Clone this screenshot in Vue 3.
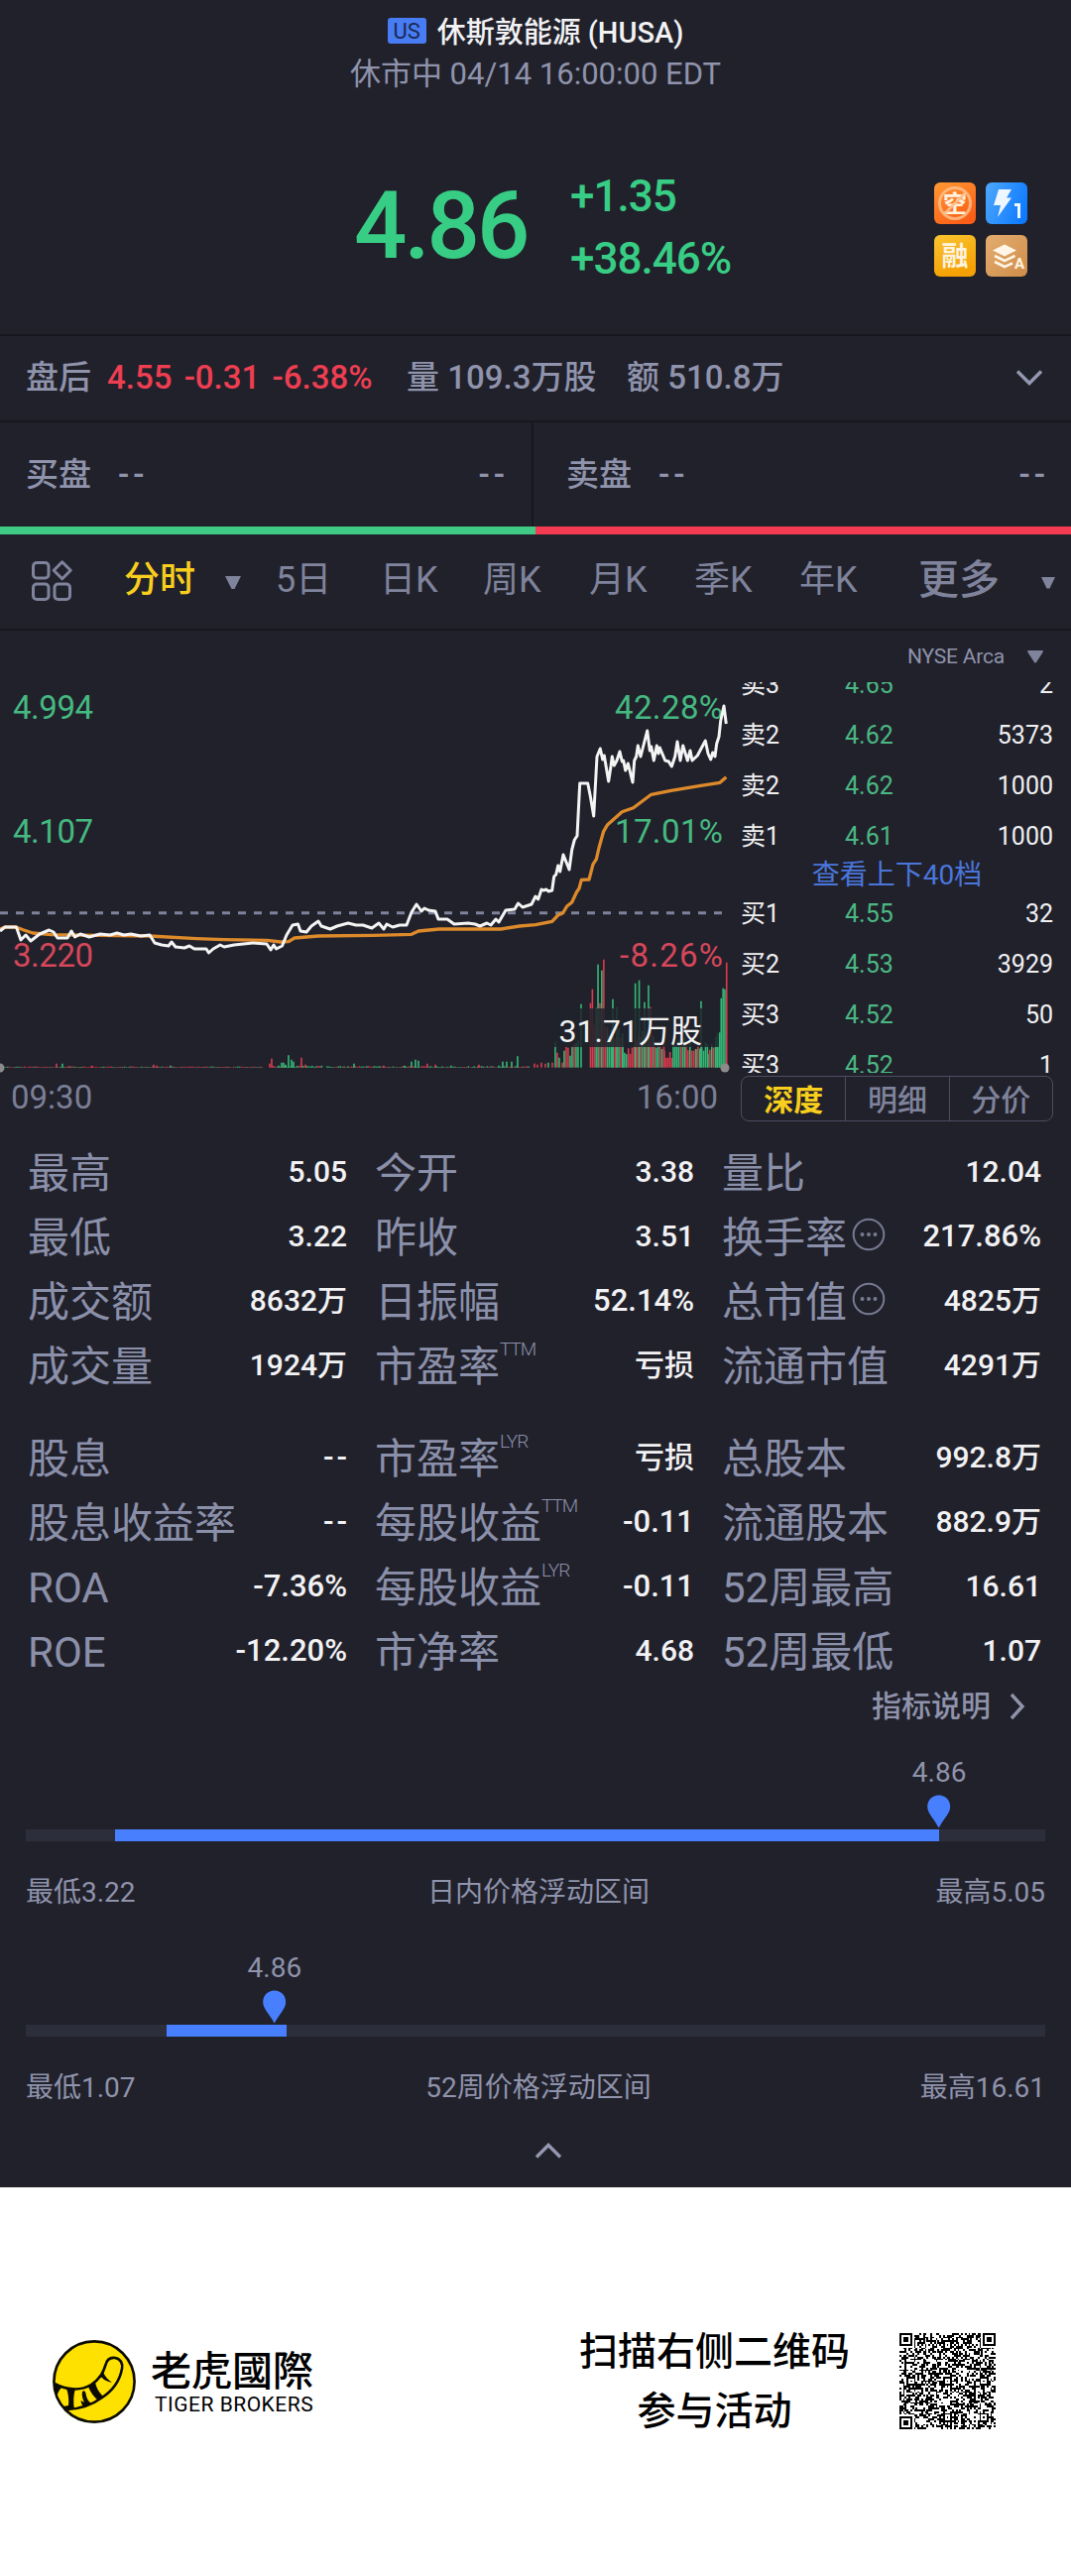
<template>
  <div class="page">
    <div class="quote-page">
      <header class="header">
        <div class="title">
          <span class="market">US</span>
          <span>休斯敦能源 (HUSA)</span>
        </div>
        <div class="status">休市中 04/14 16:00:00 EDT</div>
        <div class="quote">
          <div class="price">4.86</div>
          <div class="change">
            <div>+1.35</div>
            <div>+38.46%</div>
          </div>
          <div class="badges">
            <svg width="42" height="42" viewBox="0 0 42 42">
              <defs>
                <linearGradient id="g-short" x1="0" y1="0" x2="0.6" y2="1">
                  <stop offset="0" stop-color="#ff9a35" />
                  <stop offset="1" stop-color="#fb5f17" />
                </linearGradient>
              </defs>
              <rect width="42" height="42" rx="6" fill="url(#g-short)" />
              <text x="21" y="30" text-anchor="middle" class="badge-text" font-size="24">空</text>
              <circle cx="21" cy="21" r="15.5" fill="none" stroke="#ffc08a" stroke-width="3" opacity="0.85" />
              <path d="M10 32 L32 10" stroke="#ffc08a" stroke-width="3" opacity="0.9" />
            </svg>
            <svg width="42" height="42" viewBox="0 0 42 42">
              <defs>
                <linearGradient id="g-flash" x1="0" y1="0.2" x2="1" y2="0.6">
                  <stop offset="0" stop-color="#4ba5fb" />
                  <stop offset="1" stop-color="#0e7bff" />
                </linearGradient>
              </defs>
              <rect width="42" height="42" rx="6" fill="url(#g-flash)" />
              <path d="M13 7 H26 L21 15.500 H26 L12 35 L15 23 H8 Z" fill="#eef6ff" />
              <path d="M29 22.500 H33.500 V36" fill="none" stroke="#eef6ff" stroke-width="3" />
            </svg>
            <svg width="42" height="42" viewBox="0 0 42 42">
              <defs>
                <linearGradient id="g-margin" x1="0" y1="0" x2="0.4" y2="1">
                  <stop offset="0" stop-color="#f9c531" />
                  <stop offset="1" stop-color="#f5a003" />
                </linearGradient>
              </defs>
              <rect width="42" height="42" rx="6" fill="url(#g-margin)" />
              <text x="21" y="31" text-anchor="middle" class="badge-text" font-size="27">融</text>
            </svg>
            <svg width="42" height="42" viewBox="0 0 42 42">
              <defs>
                <linearGradient id="g-level" x1="0" y1="0" x2="1" y2="1">
                  <stop offset="0" stop-color="#e3ad70" />
                  <stop offset="1" stop-color="#cf8d49" />
                </linearGradient>
              </defs>
              <rect width="42" height="42" rx="6" fill="url(#g-level)" />
              <path d="M19 9.500 L31 15.500 L19 21.500 L7 15.500 Z" fill="#fff6e8" />
              <path d="M9 21 L19 26 L29.500 21 M9 27 L19 32 L27 28.500" fill="none" stroke="#fff6e8" stroke-width="2.600" />
              <text x="34" y="34" text-anchor="middle" class="badge-text" font-size="15">A</text>
            </svg>
          </div>
        </div>
      </header>

      <div class="after-hours">
        <span>盘后</span>
        <span class="after-price">4.55 -0.31 -6.38%</span>
        <span class="after-volume">量 109.3万股</span>
        <span class="after-amount">额 510.8万</span>
        <svg class="after-arrow" width="28" height="18" viewBox="0 0 28 18">
          <path d="M2 2.500 L14 14.500 L26 2.500" fill="none" stroke="#9498b0" stroke-width="3.400" />
        </svg>
      </div>

      <div class="bid-ask">
        <div class="side"><span>买盘</span><i>--</i><b>--</b></div>
        <div class="side ask"><span>卖盘</span><i>--</i><b>--</b></div>
      </div>
      <div class="ratio"><div></div><div></div></div>

      <nav class="tabs">
        <svg width="42" height="42" viewBox="0 0 42 42" fill="none" stroke="#7f839b" stroke-width="3">
          <rect x="2.500" y="2.500" width="15.500" height="15.500" rx="3.500" />
          <rect x="2.500" y="24" width="15.500" height="15.500" rx="3.500" />
          <rect x="24" y="24" width="15.500" height="15.500" rx="3.500" />
          <path d="M31.700 1.800 L40.200 10.300 L31.700 18.800 L23.200 10.300 Z" stroke-linejoin="round" />
        </svg>
        <span class="active">分时</span>
        <svg class="caret" width="16" height="14" viewBox="0 0 16 14"><path d="M0 0 H16 L9.500 13 H6.500 Z" fill="#7f839b" /></svg>
        <span v-for="tab in tabs" :key="tab">{{ tab }}</span>
        <span class="more">更多</span>
        <svg class="caret" width="14" height="12" viewBox="0 0 14 12"><path d="M0 0 H14 L8.500 11.500 H5.500 Z" fill="#7f839b" /></svg>
      </nav>

      <section class="chart-section">
        <svg class="chart" width="736" height="513" viewBox="0 636 736 513">
          <rect
            v-for="(bar, i) in volumeBars"
            :key="i"
            :x="bar[0] - 0.85"
            :y="1076.7 - bar[1]"
            width="1.6"
            :height="bar[1]"
            :fill="bar[2] ? '#35b877' : '#d83c4e'"
          />
          <rect x="556" y="1017" width="169" height="39" fill="#20222b" opacity="0.85" />
          <circle cx="0" cy="1077" r="4.500" fill="#8b8b8b" />
          <circle cx="731" cy="1077" r="4.500" fill="#8b8b8b" />
          <path d="M0 920.700 H728" stroke="#7f839b" stroke-width="3" stroke-dasharray="8 8" />
          <g class="axis">
            <text x="13" y="725" class="up" textLength="81">4.994</text>
            <text x="13" y="850" class="up" textLength="81">4.107</text>
            <text x="13" y="974.500" class="down" textLength="81">3.220</text>
            <text x="620" y="725" class="up" textLength="109">42.28%</text>
            <text x="620" y="850" class="up" textLength="109">17.01%</text>
            <text x="625" y="974.500" class="down" textLength="104">-8.26%</text>
            <text x="11" y="1118">09:30</text>
            <text x="724" y="1118" class="end">16:00</text>
          </g>
          <polyline :points="averageLine" fill="none" stroke="#dd8a2b" stroke-width="3.300" stroke-linejoin="round" />
          <polyline :points="priceLine" fill="none" stroke="#f4f4f4" stroke-width="3" stroke-linejoin="round" />
          <text x="563.500" y="1050.500" class="volume-text">31.71万股</text>
        </svg>

        <div class="depth">
          <div class="exchange">
            NYSE Arca
            <svg width="16" height="13" viewBox="0 0 16 13"><path d="M1 0 H15 Q16.500 0 15.500 2 L9 12 Q8 13 7 12 L0.500 2 Q-0.500 0 1 0 Z" fill="#7f839b" /></svg>
          </div>
          <div class="book">
            <div v-for="(row, i) in asks" :key="'a' + i" class="book-row">
              <span>{{ row[0] }}</span><span class="up">{{ row[1] }}</span><span>{{ row[2] }}</span>
            </div>
            <div class="book-link">查看上下40档</div>
            <div v-for="(row, i) in bids" :key="'b' + i" class="book-row">
              <span>{{ row[0] }}</span><span class="up">{{ row[1] }}</span><span>{{ row[2] }}</span>
            </div>
          </div>
          <div class="segment">
            <span class="selected">深度</span><span>明细</span><span>分价</span>
          </div>
        </div>
      </section>

      <section v-for="(group, g) in stats" :key="g" class="stats">
        <div v-for="item in group" :key="item.label + item.sup" class="stat">
          <span class="stat-label">{{ item.label }}<sup v-if="item.sup">{{ item.sup }}</sup></span>
          <svg v-if="item.info" class="info" width="34" height="34" viewBox="0 0 34 34">
            <circle cx="17" cy="17" r="15.300" fill="none" stroke="#777b92" stroke-width="2" />
            <circle cx="10.500" cy="17" r="2" fill="#777b92" />
            <circle cx="17" cy="17" r="2" fill="#777b92" />
            <circle cx="23.500" cy="17" r="2" fill="#777b92" />
          </svg>
          <span class="stat-value" :class="{ wide: /[-%]/.test(item.value), empty: item.value === '--' }">{{ item.value }}</span>
        </div>
      </section>

      <div class="explain">
        <span>指标说明</span>
        <svg width="16" height="28" viewBox="0 0 16 28">
          <path d="M2 2 L13 14 L2 26" fill="none" stroke="#8f93ab" stroke-width="3.400" />
        </svg>
      </div>

      <section v-for="range in ranges" :key="range.name" class="range">
        <div class="track">
          <div class="fill" :style="{ left: range.from + '%', width: range.to - range.from + '%' }"></div>
          <div class="marker" :style="{ left: range.at + '%' }">
            <span>4.86</span>
            <svg width="24" height="34" viewBox="0 0 24 34">
              <path d="M12 0.500 C5.500 0.500 0.500 5.500 0.500 12 C0.500 19 7 24 12 33.500 C17 24 23.500 19 23.500 12 C23.500 5.500 18.500 0.500 12 0.500 Z" fill="#477fff" />
            </svg>
          </div>
        </div>
        <div class="range-labels">
          <span>{{ range.low }}</span>
          <span>{{ range.name }}</span>
          <span>{{ range.high }}</span>
        </div>
      </section>

      <div class="collapse">
        <svg width="28" height="18" viewBox="0 0 28 18">
          <path d="M2 15.500 L14 3.500 L26 15.500" fill="none" stroke="#9498b0" stroke-width="3.400" />
        </svg>
      </div>
    </div>

    <footer class="footer">
      <svg class="logo" width="84" height="84" viewBox="0 0 84 84">
        <circle cx="42" cy="42" r="40.600" fill="#ffe100" stroke="#0b0b00" stroke-width="2.600" />
        <path
          d="M2 44 C13 50 28 52 39 45 C48 39 51 33 53.500 25 C55 19 59 17.500 63 18 C69 19 71 24 70 29 C68 40 62 50 50 58 C39 66 27 69.500 15 70"
          fill="none"
          stroke="#0b0b00"
          stroke-width="2.600"
        />
        <path d="M1 43 L9 48 Q5 52 4.500 58 Q1 51 1 43 Z M14 49 H23 Q20 59 22 70 L14 70 L11 67 L16 66 Q17 57 14 49 Z M30 52 Q33 50 33.500 54 Q34.500 61 39 64 L32 67 Q29 66 28.500 61 L32 63 Q29 57 30 52 Z M36 47 L43 42 Q44 50 51 57 L46 61 Q39 55 36 47 Z M46 37 L51 32 Q53 38 60 43 Q52 41 50 38 Z" fill="#0b0b00" />
      </svg>
      <div class="brand">
        <div class="brand-cn">老虎國際</div>
        <div class="brand-en">TIGER BROKERS</div>
      </div>
      <div class="promo">
        <div>扫描右侧二维码</div>
        <div>参与活动</div>
      </div>
      <svg class="qr" width="97" height="97" viewBox="0 0 53 53" shape-rendering="crispEdges">
        <path :d="qrPath" fill="#000" />
      </svg>
    </footer>
  </div>
</template>

<script setup>
const tabs = ['5日', '日K', '周K', '月K', '季K', '年K']

const asks = [
  ['卖3', '4.65', '2'],
  ['卖2', '4.62', '5373'],
  ['卖2', '4.62', '1000'],
  ['卖1', '4.61', '1000']
]

const bids = [
  ['买1', '4.55', '32'],
  ['买2', '4.53', '3929'],
  ['买3', '4.52', '50'],
  ['买3', '4.52', '1']
]

const stats = [
  [
    { label: '最高', value: '5.05' },
    { label: '今开', value: '3.38' },
    { label: '量比', value: '12.04' },
    { label: '最低', value: '3.22' },
    { label: '昨收', value: '3.51' },
    { label: '换手率', value: '217.86%', info: true },
    { label: '成交额', value: '8632万' },
    { label: '日振幅', value: '52.14%' },
    { label: '总市值', value: '4825万', info: true },
    { label: '成交量', value: '1924万' },
    { label: '市盈率', sup: 'TTM', value: '亏损' },
    { label: '流通市值', value: '4291万' }
  ],
  [
    { label: '股息', value: '--' },
    { label: '市盈率', sup: 'LYR', value: '亏损' },
    { label: '总股本', value: '992.8万' },
    { label: '股息收益率', value: '--' },
    { label: '每股收益', sup: 'TTM', value: '-0.11' },
    { label: '流通股本', value: '882.9万' },
    { label: 'ROA', value: '-7.36%' },
    { label: '每股收益', sup: 'LYR', value: '-0.11' },
    { label: '52周最高', value: '16.61' },
    { label: 'ROE', value: '-12.20%' },
    { label: '市净率', value: '4.68' },
    { label: '52周最低', value: '1.07' }
  ]
]

const ranges = [
  { name: '日内价格浮动区间', low: '最低3.22', high: '最高5.05', from: 8.75, to: 89.6, at: 89.6 },
  { name: '52周价格浮动区间', low: '最低1.07', high: '最高16.61', from: 13.8, to: 25.6, at: 24.4 }
]

const priceLine =
  '0,939 5,935 16.5,935 21,948 26,943 31,949 40,942 49.5,938 54,940 58,946 68,946 72,939 75.5,945 81,942 90,945 101,942 111,943 118,941 125,943 132,942 142,944 151,943 156,951 163,953 170,954 173,950 177,955 186,956 191,954 196,957 208,957 210.5,961 215,957 222,953 226,955 236,953 255,951 269,952 273,958 276,953 278.5,957 284.5,954 289,943 295,933 300.5,932 303,939 309,940 314,934 321,929 324,934 333,937 340,934 351,931 359,933 366,933 375,936 382,931 387,937 390,932 396,935 403,933 410,933 415,920 420,912 425,919 428,916 432,918 439,919 442,927 451,927 458,932 472,931 479,932 484,934 491,931 495,933 500,927 503,930 510,918 519,917 522.5,911 527,915 536,912 ' +
  '540,904 542.7,907 546,897 548,898 551,897 553,899 556.7,898 558.7,884 560.7,882 562.7,873 564.7,879 568,862 574,877 576.7,857 579.3,847 582,843 584.7,790 592.7,790 595.3,803 598.7,823 602,763 605.3,755 607.7,766 609.3,762 613.7,788 616,773 617.3,763 619.3,772 622,767 625,758 627.3,768 628.7,767 630.7,777 633.3,770 638,789 639.7,767 641.7,763 643.3,752 646,763 652.7,737 655.3,757 656.7,753 659.3,767 662.3,752 664,760 665.3,754 670.7,767 674.3,768 677.3,773 680.7,763 683,748 686,767 688.7,752 693.3,767 696,757 698,767 703.3,762 711.3,747 714,760 716.7,766 718.7,759 721,763 722.7,750 725,743 726.7,727 730,712 732.3,730'

const averageLine =
  '0,937 5,935 16,935 24,938 33,941 52,942.7 99,943.3 151,944 198,946.7 226,947.7 269,948.3 283,950 291,949.7 297,946 321,944 377,943.3 415,942.3 422,939 443,937 505,937 524,934 540,932.7 556.7,929.3 562.7,923 567.7,920.7 571.7,914 576.7,910 581.3,900 584,896 586.3,887.3 594,887 598,871.7 601.3,866.7 604,855 608.7,838.3 612.7,831.7 627.3,818.7 638.7,814.7 656.7,801.3 676.7,797.3 706.7,792.3 726,789.3 732.3,783.7'

// small linear congruential generator, keeps the drawing stable between renders
function createRandom(seed) {
  let s = seed
  return () => {
    s = (s * 1103515245 + 12345) % 2147483648
    return s / 2147483648
  }
}

// [x, height, isUp]
const peaks = [
  [57, 4, 0], [63, 4, 1], [70, 1.5, 0], [93, 2, 0], [155, 3, 0], [158, 2, 0], [172, 2, 1],
  [272, 4, 0], [274, 9, 0], [281, 2, 1], [284, 5, 1], [286, 5, 1], [288, 3, 1], [291, 12.5, 1], [294, 8, 1], [296, 6, 1],
  [304, 10, 0], [308, 3, 0], [357, 4, 1], [387, 2, 0], [408, 2, 1], [415, 6, 1], [419, 8, 1], [422, 7, 1],
  [431, 4, 0], [439, 3, 0], [455, 2, 1], [483, 3, 0], [503, 2, 1], [507, 6, 1], [511, 6, 1], [516, 6, 1], [522, 11.5, 1],
  [539, 4, 0], [542, 3, 0], [546, 5, 0], [550, 4, 0], [553, 5, 1], [557, 5, 0],
  [560, 26, 1], [562, 15, 0], [564, 10, 1], [567, 5, 0], [569, 17, 1], [571, 21, 0], [573, 20, 0], [575, 12, 1], [577, 21, 1], [579, 24, 0], [581, 25, 1], [583, 28, 1], [586, 64, 1],
  [595.5, 65, 0], [597.4, 79, 0], [599.3, 43, 0], [601.2, 60, 1], [603.1, 104, 1], [605, 65, 0], [606.9, 98, 1], [608.9, 109, 0],
  [618, 69, 1], [622, 60, 1], [640.7, 85, 1], [644.6, 88, 1], [650, 66, 1], [654, 83, 1], [656, 61, 0],
  [707, 67, 1], [723.5, 35, 1], [727.3, 70, 1], [729.2, 80, 1], [731, 79, 1], [732.8, 106, 0]
]

// [from, to, minHeight, maxHeight, share of rising bars]
const runs = [
  [4, 265, 0.4, 1.1, 0.4],
  [275, 325, 0.6, 2, 0.5],
  [330, 535, 0.4, 1.5, 0.5],
  [610.8, 628, 24, 42, 0.55],
  [628, 640, 13, 24, 0.3],
  [642, 660, 24, 40, 0.6],
  [660, 670, 17, 30, 0.4],
  [670, 679, 8, 18, 0.1],
  [679, 692, 20, 34, 0.6],
  [692, 702, 16, 26, 0.2],
  [702, 714, 14, 28, 0.9],
  [714, 722, 12, 26, 0.2],
  [722, 727, 20, 36, 1]
]

const random = createRandom(17)
const volumeBars = []
for (const [from, to, min, max, up] of runs) {
  for (let x = from; x < to; x += 1.9) {
    volumeBars.push([x, min + random() * (max - min), random() < up])
  }
}
volumeBars.push(...peaks)

// QR symbol, 53 x 53 modules
function buildQr() {
  const size = 53
  const rand = createRandom(905)
  const grid = Array.from({ length: size }, () => Array.from({ length: size }, () => rand() < 0.5))
  for (let i = 8; i < size - 8; i++) {
    grid[6][i] = i % 2 === 0
    grid[i][6] = i % 2 === 0
  }
  const finders = [[0, 0], [size - 7, 0], [0, size - 7]]
  for (const [fx, fy] of finders) {
    for (let y = -1; y < 8; y++) {
      for (let x = -1; x < 8; x++) {
        if (!grid[fy + y] || fx + x < 0 || fx + x >= size) continue
        const d = Math.max(Math.abs(x - 3), Math.abs(y - 3))
        grid[fy + y][fx + x] = d !== 2 && d !== 4
      }
    }
  }
  const centers = [[26, 6], [6, 26], [26, 26], [46, 26], [26, 46], [46, 46]]
  for (const [cx, cy] of centers) {
    for (let y = -2; y < 3; y++) {
      for (let x = -2; x < 3; x++) {
        grid[cy + y][cx + x] = Math.max(Math.abs(x), Math.abs(y)) !== 1
      }
    }
  }
  let d = ''
  grid.forEach((row, y) => {
    row.forEach((on, x) => {
      if (on) d += `M${x} ${y}h1v1h-1z`
    })
  })
  return d
}

const qrPath = buildQr()
</script>

<style>
body {
  margin: 0;
  background: #fff;
}
</style>

<style scoped>
.page {
  width: 1080px;
  height: 2598px;
  overflow: hidden;
  font-family: Roboto, "Noto Sans CJK SC", sans-serif;
  line-height: 1.2;
  color: #8f93ab;
}

.page svg {
  display: block;
  flex: none;
}

.page * {
  box-sizing: border-box;
}

.quote-page {
  height: 2206px;
  background: #21212b;
}

/* header */
.header {
  height: 339px;
  padding-top: 14px;
  border-bottom: 2px solid #17171f;
}

.title {
  display: flex;
  align-items: center;
  justify-content: center;
  gap: 11px;
  height: 38px;
  font-size: 29px;
  font-weight: 500;
  color: #f2f2f4;
}

.market {
  width: 39px;
  height: 26px;
  margin-top: -4px;
  border-radius: 3px;
  background: #477cf5;
  color: #1b2850;
  font-size: 22px;
  font-weight: 400;
  line-height: 27px;
  text-align: center;
}

.status {
  height: 44px;
  font-size: 31px;
  line-height: 46px;
  text-align: center;
}

.quote {
  display: flex;
  align-items: center;
  height: 127px;
  margin-top: 69px;
  padding: 0 44px 0 357px;
  color: #38cd85;
  font-weight: 500;
}

.price {
  width: 218px;
  font-size: 94px;
  letter-spacing: -3px;
}

.change {
  padding-top: 2px;
  font-size: 44px;
  line-height: 63px;
  letter-spacing: -1px;
}

.badges {
  display: grid;
  grid-template-columns: 42px 42px;
  gap: 11px 10px;
  margin: 6px 0 0 auto;
}

.badge-text {
  fill: #fff3e0;
  font-weight: 700;
}

/* after hours */
.after-hours {
  display: flex;
  align-items: center;
  height: 87px;
  padding: 0 28px 2px 26px;
  border-bottom: 2px solid #17171f;
  font-size: 33px;
  font-weight: 500;
}

.after-price {
  width: 302px;
  margin-left: 16px;
  color: #ee3e52;
  word-spacing: 4px;
}

.after-volume {
  width: 222px;
}

.after-arrow {
  margin-left: auto;
}

/* bid / ask */
.bid-ask {
  display: flex;
  height: 105px;
  font-size: 33px;
  font-weight: 500;
}

.side {
  display: flex;
  align-items: center;
  width: 538px;
  padding: 0 27px 0 26px;
  border-right: 2px solid #17171f;
}

.side i {
  margin-left: 27px;
  font-style: normal;
  letter-spacing: 4px;
}

.side b {
  margin-left: auto;
  margin-right: -4px;
  font-weight: 500;
  letter-spacing: 4px;
}

.ask {
  width: 542px;
  padding: 0 26px 0 33px;
  border-right: none;
}

.ratio {
  display: flex;
  height: 8px;
}

.ratio div {
  width: 50%;
  background: #3fca86;
}

.ratio div + div {
  background: #f53b51;
}

/* period tabs */
.tabs {
  display: grid;
  grid-template-columns: 94px 102px 51px 105px 104px 107px 106px 106px 120px 124px auto;
  align-items: center;
  height: 97px;
  padding: 0 0 2px 31px;
  border-bottom: 2px solid #17171f;
  font-size: 36px;
  color: #7f839b;
  white-space: nowrap;
}

.tabs .active {
  color: #f8cf1d;
  font-weight: 500;
}

.tabs .more {
  font-size: 41px;
  font-weight: 500;
}

.tabs .caret {
  margin-top: 4px;
}

/* chart */
.chart-section {
  display: flex;
  height: 513px;
}

.chart .axis {
  font-size: 33px;
  fill: #7b7f96;
}

.chart .axis .up {
  fill: #45b981;
}

.chart .axis .down {
  fill: #d5475a;
}

.chart .end {
  text-anchor: end;
}

.volume-text {
  font-size: 32px;
  fill: #f2f2f2;
}

.depth {
  width: 315px;
  margin-left: 11px;
}

.exchange {
  display: flex;
  align-items: center;
  justify-content: flex-end;
  gap: 23px;
  height: 53px;
  margin-bottom: -1px;
  padding-right: 10px;
  font-size: 21px;
  letter-spacing: -0.2px;
}

.book {
  height: 394px;
  overflow: hidden;
  color: #f0f0f2;
  font-size: 25px;
}

.book-row {
  display: grid;
  grid-template-columns: 105px 1fr auto;
  align-items: center;
  height: 51px;
}

.book-row:first-child {
  margin-top: -23px;
}

.book-row .up {
  color: #4bb883;
}

.book-link {
  height: 27px;
  font-size: 28px;
  line-height: 27px;
  text-align: center;
  color: #4a76dc;
}

.segment {
  display: grid;
  grid-template-columns: repeat(3, 1fr);
  height: 46px;
  margin-top: 3px;
  border: 1px solid #4b4d60;
  border-radius: 8px;
  color: #7f839b;
  font-size: 30px;
  font-weight: 500;
  text-align: center;
}

.segment span {
  height: 44px;
  padding-top: 3px;
  line-height: 41px;
}

.segment span + span {
  border-left: 1px solid #4b4d60;
}

.segment .selected {
  color: #f8cf1d;
  font-weight: 700;
}

/* stats */
.stats {
  display: grid;
  grid-template-columns: repeat(3, 321px);
  grid-auto-rows: 65px;
  column-gap: 29px;
  padding-left: 28px;
}

.stats + .stats {
  margin-top: 28px;
}

.stat {
  display: flex;
  align-items: center;
  white-space: nowrap;
}

.stat-label {
  display: flex;
  margin-top: 3px;
  font-size: 42px;
  line-height: 65px;
  color: #8b90aa;
}

.stat-label sup {
  font-size: 19px;
  line-height: 29px;
  font-weight: 300;
  letter-spacing: -1px;
}

.info {
  margin: -3px 0 0 5px;
}

.stat-value {
  margin-left: auto;
  margin-right: -1px;
  color: #f2f2f4;
  font-size: 30px;
  font-weight: 500;
}

.stat-value.wide {
  font-size: 31px;
}

.stat-value.empty {
  margin-right: -4px;
  letter-spacing: 3px;
}

.explain {
  display: flex;
  align-items: center;
  justify-content: flex-end;
  gap: 19px;
  height: 47px;
  padding-right: 46px;
  font-size: 30px;
  font-weight: 500;
}

/* ranges */
.range {
  height: 197px;
  padding: 101px 26px 0;
  font-size: 28px;
}

.track {
  position: relative;
  height: 12px;
  background: #2d2e3b;
}

.fill {
  position: absolute;
  top: 0;
  height: 12px;
  background: #477fff;
}

.marker {
  position: absolute;
  bottom: 13px;
  display: flex;
  flex-direction: column;
  align-items: center;
  gap: 4px;
  line-height: 36px;
  transform: translateX(-50%);
}

.range-labels {
  display: grid;
  grid-template-columns: 1fr auto 1fr;
  margin-top: 34px;
  padding-left: 0;
  line-height: 36px;
}

.range-labels span:nth-child(2) {
  padding-left: 6px;
}

.range-labels span:last-child {
  text-align: right;
}

.collapse {
  display: flex;
  justify-content: center;
  padding: 22px 0 0 26px;
}

/* footer */
.footer {
  display: flex;
  align-items: center;
  height: 392px;
  padding-left: 53px;
  color: #000;
}

.brand {
  width: 432px;
  margin: 0 0 0 15px;
}

.brand-cn {
  font-family: "Noto Sans CJK TC", sans-serif;
  font-size: 41px;
  font-weight: 500;
  line-height: 46px;
}

.brand-en {
  padding-left: 4px;
  font-size: 21px;
  line-height: 28px;
  letter-spacing: 0.5px;
}

.promo {
  width: 273px;
  font-size: 39px;
  font-weight: 500;
  line-height: 60px;
  text-align: center;
}

.qr {
  margin: -2px 0 0 50px;
}
</style>
